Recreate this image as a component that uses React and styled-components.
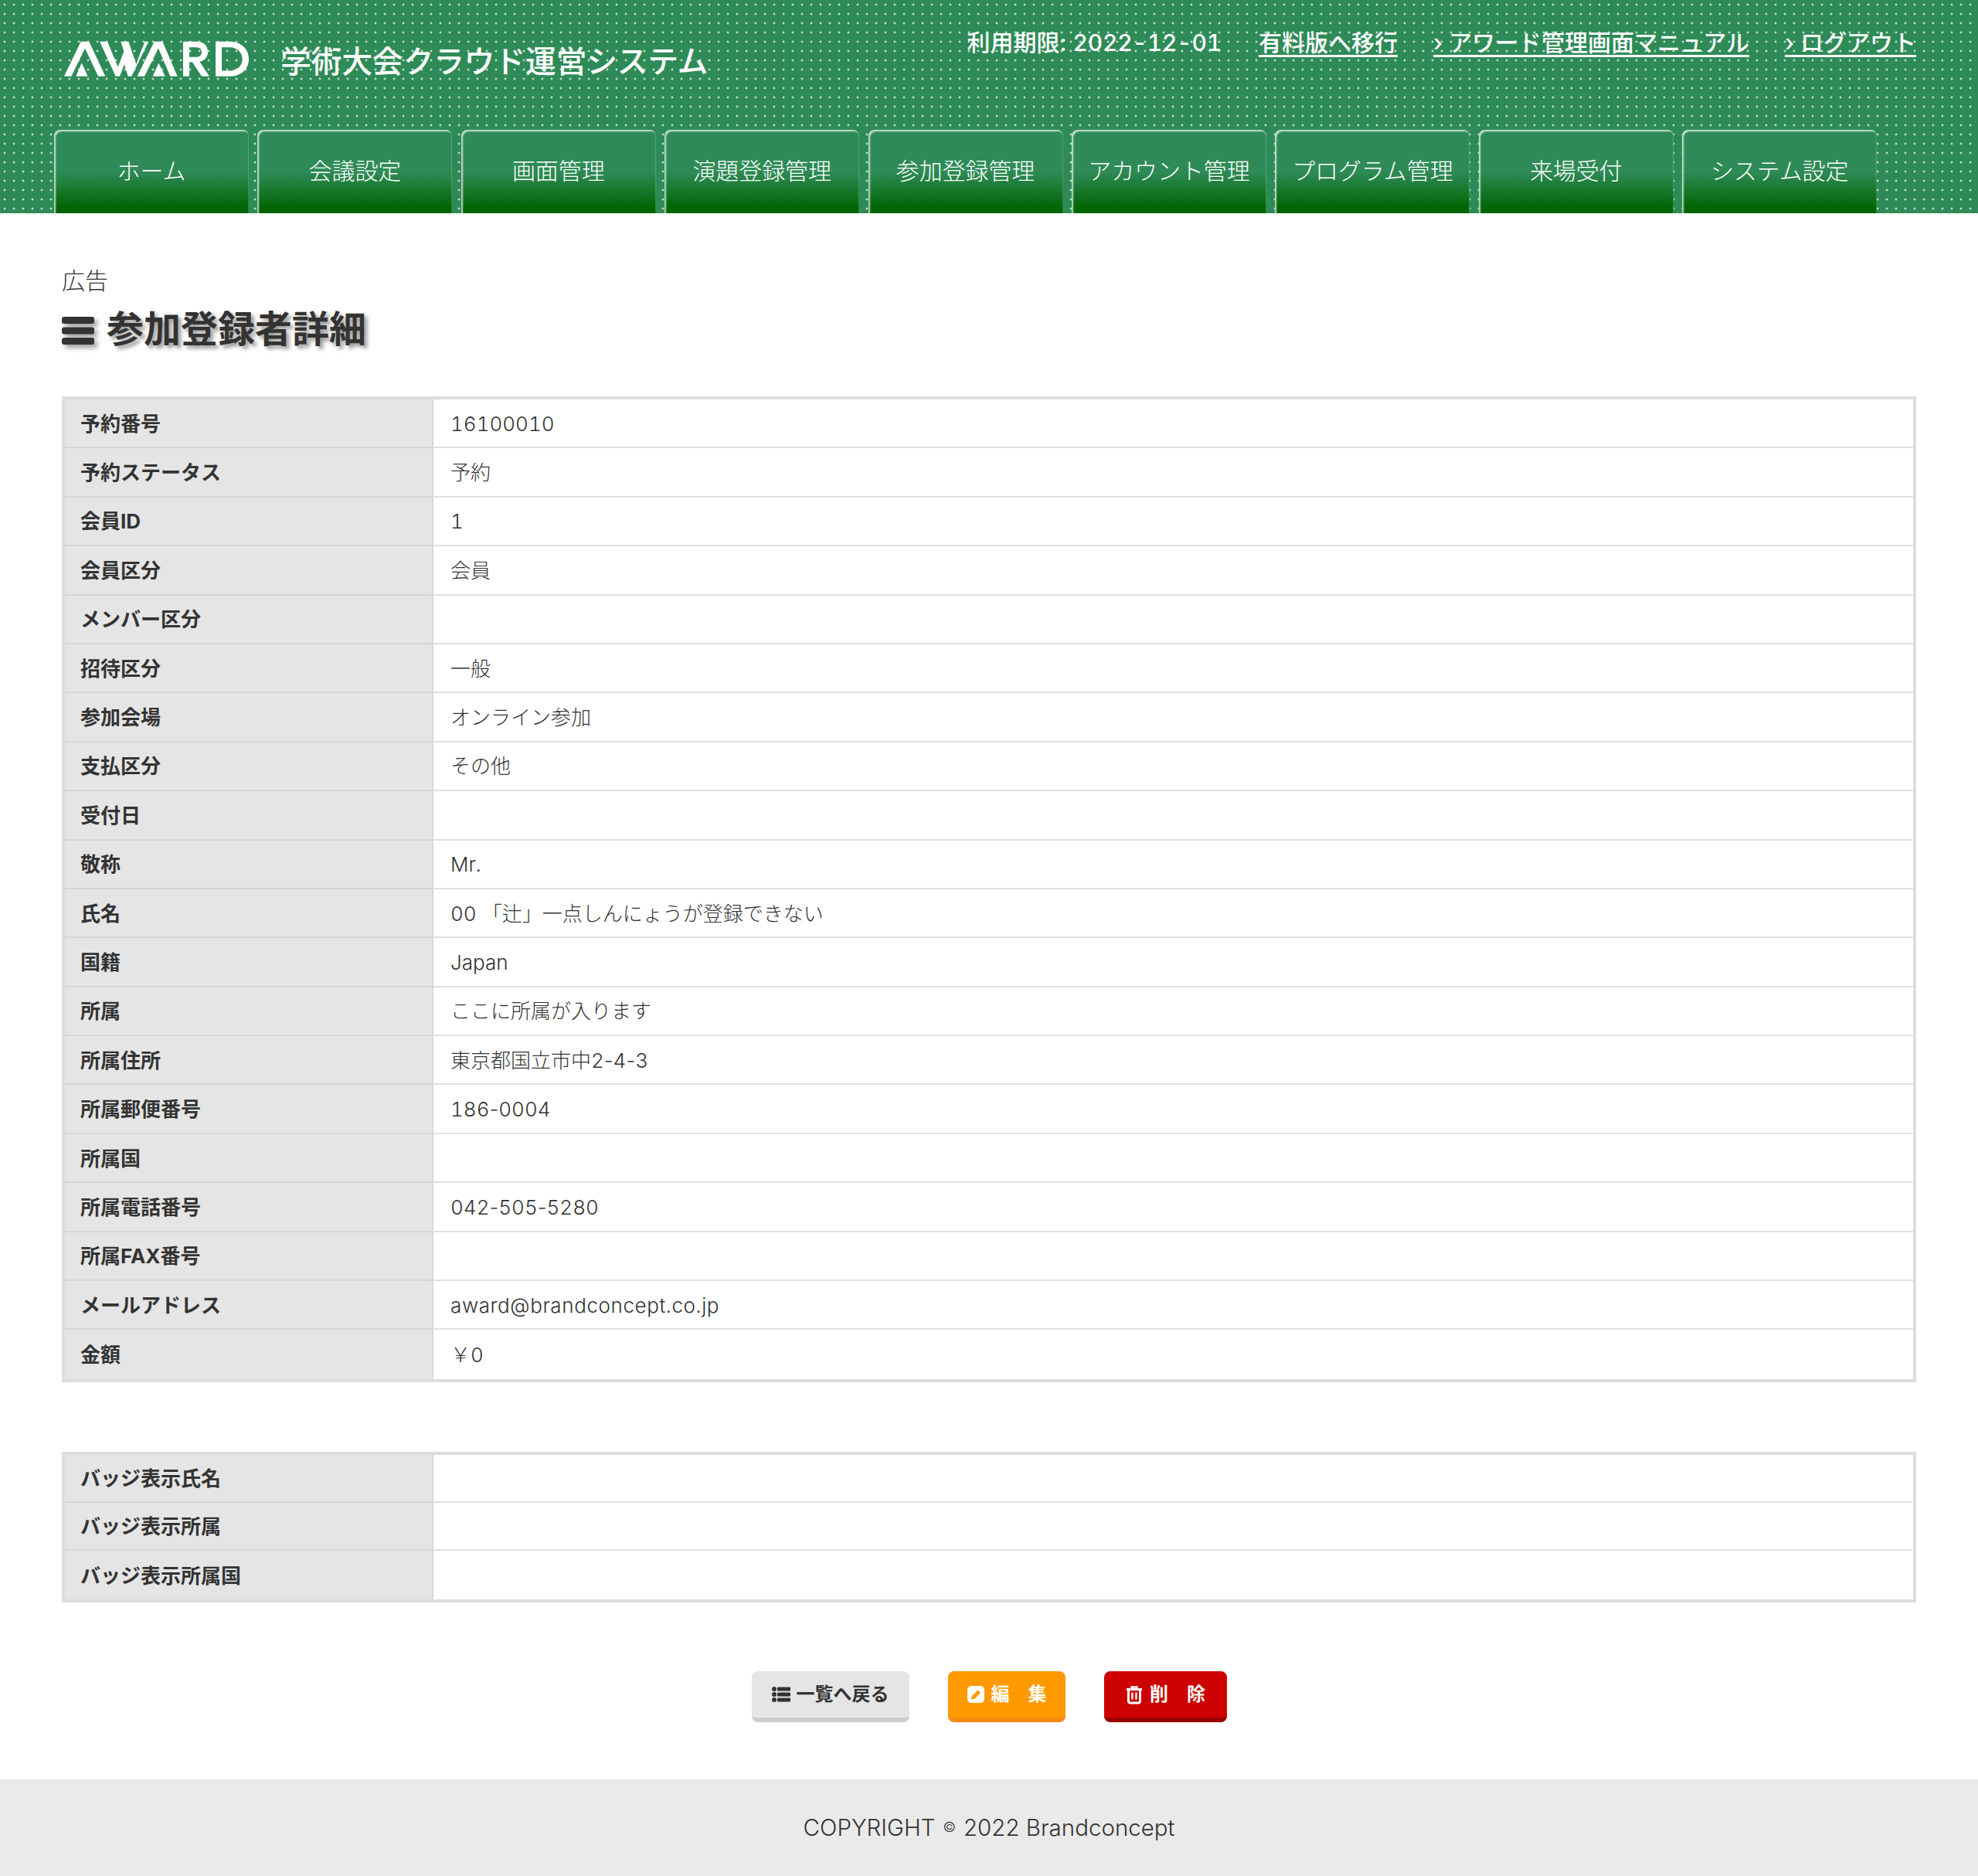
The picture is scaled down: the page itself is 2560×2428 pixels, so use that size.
import React from "react";
import styled, { createGlobalStyle } from "styled-components";

const Global = createGlobalStyle`
  html, body { margin: 0; padding: 0; background: #fff; }
  body { font-family: Inter, "Noto Sans CJK JP", "Noto Sans", sans-serif; color: #333; }
  a { color: inherit; }
`;

const Page = styled.div`
  width: 2560px;
  min-height: 2428px;
  display: flex;
  flex-direction: column;
`;

const Header = styled.header`
  height: 276px;
  box-sizing: border-box;
  background-color: #2e8b57;
  background-image: radial-gradient(circle at 6px 6px, rgba(255,255,255,.7) 1px, rgba(255,255,255,0) 1.8px);
  background-size: 12px 12px;
  display: flex;
  flex-direction: column;
  justify-content: space-between;
  color: #fff;
`;

const TopRow = styled.div`
  display: flex;
  justify-content: space-between;
  align-items: flex-start;
  padding: 33px 80px 0 83px;
`;

const Brand = styled.div`
  display: flex;
  align-items: flex-start;
  gap: 41px;
`;

const Logo = styled.svg`
  width: 239px;
  height: 46px;
  display: block;
  margin-top: 20px;
`;

const SystemName = styled.h1`
  margin: 19px 0 0;
  font-size: 40px;
  line-height: 56px;
  font-weight: 500;
  color: #fff;
  letter-spacing: -0.4px;
`;

const Utility = styled.div`
  display: flex;
  align-items: center;
  gap: 46px;
  font-size: 30px;
  line-height: 44px;
  font-weight: 500;
`;

const UtilityLink = styled.a`
  text-decoration: underline;
  text-decoration-thickness: 3px;
  text-underline-offset: 5px;
`;

const Expiry = styled.span`
  margin-right: 2px;
`;

const ExpiryDate = styled.span`
  font-feature-settings: "tnum";
  letter-spacing: -0.2px;
`;

const Nav = styled.nav`
  display: flex;
  gap: 11.4px;
  padding-left: 70px;
`;

const Tab = styled.a`
  width: 252px;
  height: 108px;
  box-sizing: border-box;
  padding-bottom: 3px;
  display: flex;
  align-items: center;
  justify-content: center;
  border-radius: 8px 8px 0 0;
  background: linear-gradient(to bottom, #2e8b57 0%, #2e8b57 50%, #006400 95%, #006400 100%);
  box-shadow: inset 2px 2px 2px rgba(255,255,255,.75), inset -1px 0 1px rgba(255,255,255,.2);
  color: #fff;
  font-size: 30px;
  line-height: 44px;
  white-space: nowrap;
  font-weight: 300;
  letter-spacing: -0.1px;
`;

const Main = styled.main`
  flex: 1;
  padding: 67px 80px 0;
`;

const Crumb = styled.p`
  margin: 0;
  font-size: 30px;
  line-height: 40px;
  font-weight: 300;
`;

const Title = styled.h2`
  margin: 11px 0 0;
  display: flex;
  align-items: center;
  gap: 16px;
  font-size: 48px;
  line-height: 64px;
  font-weight: 700;
  color: #333;
  text-shadow: 4px 4px 5px #999;
`;

const BarsIcon = styled.svg`
  width: 42px;
  height: 36px;
  margin-top: 4px;
  flex: none;
  filter: drop-shadow(4px 4px 3px #999);
`;

const Table = styled.table`
  width: 2400px;
  border: 4px solid #ddd;
  border-spacing: 0;
  border-collapse: separate;
  table-layout: fixed;
  margin-top: ${p => p.$top}px;
`;

const Row = styled.tr`
  height: ${p => p.$height}px;
`;

const Label = styled.th`
  width: 477px;
  box-sizing: border-box;
  padding: 2px 0 0 20px;
  text-align: left;
  background: #e5e5e5;
  font-size: 26px;
  line-height: 36px;
  font-weight: 700;
  color: #333;
  border-right: 2px solid #d8d8d8;
  border-bottom: ${p => (p.$last ? "0" : "2px solid #d6d6d6")};
`;

const Value = styled.td`
  padding: 2px 0 0 22px;
  font-size: 26px;
  line-height: 36px;
  font-weight: 300;
  color: #333;
  background: #fff;
  font-feature-settings: "tnum";
  letter-spacing: ${p => (p.$wide ? "0.6px" : "0")};
  border-bottom: ${p => (p.$last ? "0" : "2px solid #e0e0e0")};
`;

const Dash = styled.span`
  font-feature-settings: normal;
`;

const Actions = styled.div`
  display: flex;
  justify-content: center;
  gap: 50px;
  margin-top: 89px;
`;

const Button = styled.a`
  height: 66px;
  box-sizing: border-box;
  width: ${p => p.$width}px;
  display: flex;
  align-items: center;
  justify-content: center;
  gap: 8px;
  border-radius: 8px;
  background: ${p => p.$bg};
  border-bottom: 6px solid ${p => p.$edge};
  color: ${p => p.$fg};
  font-size: 24px;
  font-weight: 700;
  line-height: 34px;
  white-space: nowrap;
`;

const BtnIcon = styled.svg`
  width: 24px;
  height: 26px;
  flex: none;
`;

const Footer = styled.footer`
  height: 125px;
  box-sizing: border-box;
  padding-bottom: 2px;
  background: #eaeaea;
  display: flex;
  align-items: center;
  justify-content: center;
  font-size: 29.5px;
  font-weight: 300;
  color: #333;
`;

const Copy = styled.span`
  font-size: 18px;
  margin: 0 10px;
`;

const nav = ["ホーム", "会議設定", "画面管理", "演題登録管理", "参加登録管理", "アカウント管理", "プログラム管理", "来場受付", "システム設定"];

const details = [
  ["予約番号", "16100010"],
  ["予約ステータス", "予約"],
  ["会員ID", "1"],
  ["会員区分", "会員"],
  ["メンバー区分", ""],
  ["招待区分", "一般"],
  ["参加会場", "オンライン参加"],
  ["支払区分", "その他"],
  ["受付日", ""],
  ["敬称", "Mr."],
  ["氏名", "00 「辻」一点しんにょうが登録できない"],
  ["国籍", "Japan"],
  ["所属", "ここに所属が入ります"],
  ["所属住所", "東京都国立市中2-4-3"],
  ["所属郵便番号", "186-0004"],
  ["所属国", ""],
  ["所属電話番号", "042-505-5280"],
  ["所属FAX番号", ""],
  ["メールアドレス", "award@brandconcept.co.jp", true],
  ["金額", "￥0"],
];

const badge = [["バッジ表示氏名", ""], ["バッジ表示所属", ""], ["バッジ表示所属国", ""]];

const AwardLogo = () => (
  <Logo viewBox="38 40 717 137" aria-label="AWARD">
    <g fill="#fff">
      <polygon points="38,177 103,42 135,42 198,177 170,177 119,68 66,177" />
      <polygon points="84,177 106,125 130,177" />
      <polygon points="176,42 206,42 247,140 270,80 258,42 288,42 318,130 332,90 352,42 366,42 300,177 286,177 272,130 254,177 238,177" />
      <polygon points="322,177 388,42 420,42 478,177 450,177 404,68 350,177" />
      <polygon points="382,177 405,125 430,177" />
      <path d="M500 42h52c28 0 44 16 44 40 0 20-12 34-32 38l38 57h-30l-36-55h-12v55h-24zm24 22v38h26c14 0 22-8 22-19s-8-19-22-19z" />
      <path fillRule="evenodd" d="M626 42h54c44 0 75 28 75 68s-31 67-75 67h-54zm24 22v91h30c30 0 50-19 50-45s-20-46-50-46z" />
    </g>
  </Logo>
);

const Bars = () => (
  <BarsIcon viewBox="0 0 42 36" fill="#333">
    <rect width="42" height="9" rx="3" />
    <rect y="13.5" width="42" height="9" rx="3" />
    <rect y="27" width="42" height="9" rx="3" />
  </BarsIcon>
);

const ListIcon = () => (
  <BtnIcon viewBox="0 0 24 26" fill="currentColor">
    <circle cx="3" cy="6" r="3" />
    <circle cx="3" cy="13" r="3" />
    <circle cx="3" cy="20" r="3" />
    <rect x="7" y="3.5" width="17" height="5" rx="1" />
    <rect x="7" y="10.5" width="17" height="5" rx="1" />
    <rect x="7" y="17.5" width="17" height="5" rx="1" />
  </BtnIcon>
);

const EditIcon = () => (
  <BtnIcon viewBox="0 0 24 26" >
    <rect x="1" y="2" width="22" height="22" rx="5" fill="#fff" />
    <path d="M6 19.5l1-4.5 7.5-7.5 3.5 3.5-7.5 7.5z" fill="#ff9900" />
  </BtnIcon>
);

const TrashIcon = () => (
  <BtnIcon viewBox="0 0 24 26" fill="none" stroke="#fff">
    <path d="M2 6.5h20" strokeWidth="3" />
    <path d="M8.5 6V3.5h7V6" strokeWidth="2.6" />
    <path d="M4.5 7v14.5a2.5 2.5 0 0 0 2.5 2.5h10a2.5 2.5 0 0 0 2.5-2.5V7" strokeWidth="3" />
    <path d="M9.5 10.5v9M14.5 10.5v9" strokeWidth="2.4" />
  </BtnIcon>
);

const withDashes = text =>
  text.split("-").flatMap((part, i) => (i === 0 ? [part] : [<Dash key={i}>-</Dash>, part]));

const DataTable = ({ rows, top, height }) => (
  <Table $top={top}>
    <tbody>
      {rows.map(([k, v, wide], i) => (
        <Row key={k} $height={height}>
          <Label $last={i === rows.length - 1}>{k}</Label>
          <Value $last={i === rows.length - 1} $wide={wide}>{withDashes(v)}</Value>
        </Row>
      ))}
    </tbody>
  </Table>
);

export default function App() {
  return (
    <Page>
      <Global />
      <Header>
        <TopRow>
          <Brand>
            <AwardLogo />
            <SystemName>学術大会クラウド運営システム</SystemName>
          </Brand>
          <Utility>
            <Expiry>利用期限: <ExpiryDate>2022-12-01</ExpiryDate></Expiry>
            <UtilityLink>有料版へ移行</UtilityLink>
            <UtilityLink>› アワード管理画面マニュアル</UtilityLink>
            <UtilityLink>› ログアウト</UtilityLink>
          </Utility>
        </TopRow>
        <Nav>
          {nav.map(n => <Tab key={n}>{n}</Tab>)}
        </Nav>
      </Header>
      <Main>
        <Crumb>広告</Crumb>
        <Title><Bars />参加登録者詳細</Title>
        <DataTable rows={details} top={55} height={63.4} />
        <DataTable rows={badge} top={90} height={62.3} />
        <Actions>
          <Button $width={204} $bg="#e5e5e5" $edge="#cccccc" $fg="#333"><ListIcon />一覧へ戻る</Button>
          <Button $width={152} $bg="#ff9900" $edge="#f58a14" $fg="#fff"><EditIcon />編　集</Button>
          <Button $width={159} $bg="#cc0000" $edge="#990000" $fg="#fff"><TrashIcon />削　除</Button>
        </Actions>
      </Main>
      <Footer>COPYRIGHT<Copy>©</Copy>2022 Brandconcept</Footer>
    </Page>
  );
}
